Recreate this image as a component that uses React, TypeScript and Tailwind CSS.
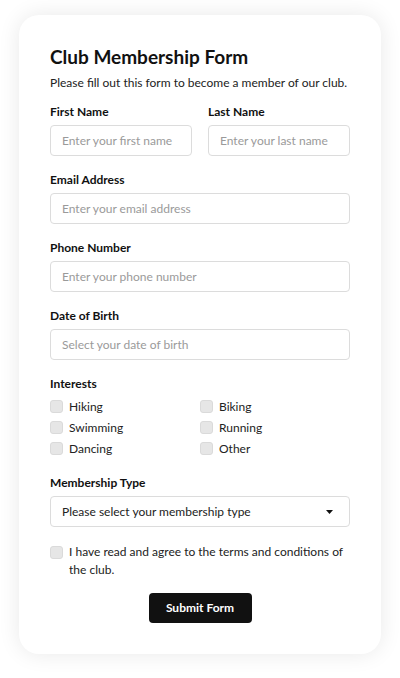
import React from 'react';

const font = { fontFamily: 'Lato, "Noto Sans", sans-serif' };

function Field({ label, placeholder }: { label: string; placeholder: string }) {
  return (
    <div className="flex flex-col">
      <label className="text-[12px] font-bold leading-[16px] text-[#111]">{label}</label>
      <div className="mt-[5px] h-[31px] rounded-[4px] border border-[#dcdcdc] px-[11px] flex items-center whitespace-nowrap overflow-hidden text-[12px] text-[#9a9a9a]">
        {placeholder}
      </div>
    </div>
  );
}

function Check({ label }: { label: string }) {
  return (
    <div className="flex items-center gap-[6px] h-[21px]">
      <span className="w-[13px] h-[13px] rounded-[3px] bg-[#e6e6e6] border border-[#dadada]" />
      <span className="text-[12px] text-[#222]">{label}</span>
    </div>
  );
}

export default function App() {
  const interests = ['Hiking', 'Biking', 'Swimming', 'Running', 'Dancing', 'Other'];

  return (
    <div className="min-h-[678px] bg-white px-[19px] pt-[15px] pb-[24px]" style={font}>
      <div className="rounded-[20px] bg-white shadow-[0_0_22px_rgba(0,0,0,0.09)] px-[31px] pt-[29px] pb-[31px]">
        <h1 className="text-[19px] font-bold leading-[26px] text-[#111]">Club Membership Form</h1>
        <p className="mt-[4px] text-[12px] leading-[18px] text-[#222] whitespace-nowrap">
          Please fill out this form to become a member of our club.
        </p>

        <div className="mt-[12px] grid grid-cols-2 gap-x-[16px]">
          <Field label="First Name" placeholder="Enter your first name" />
          <Field label="Last Name" placeholder="Enter your last name" />
        </div>

        <div className="mt-[16px]">
          <Field label="Email Address" placeholder="Enter your email address" />
        </div>
        <div className="mt-[16px]">
          <Field label="Phone Number" placeholder="Enter your phone number" />
        </div>
        <div className="mt-[16px]">
          <Field label="Date of Birth" placeholder="Select your date of birth" />
        </div>

        <div className="mt-[16px]">
          <div className="text-[12px] font-bold leading-[16px] text-[#111]">Interests</div>
          <div className="mt-[4px] grid grid-cols-2">
            {interests.map(i => (
              <Check key={i} label={i} />
            ))}
          </div>
        </div>

        <div className="mt-[16px]">
          <div className="text-[12px] font-bold leading-[16px] text-[#111]">Membership Type</div>
          <div className="mt-[5px] h-[31px] rounded-[4px] border border-[#dcdcdc] px-[11px] flex items-center justify-between text-[12px] text-[#222]">
            <span>Please select your membership type</span>
            <svg width="7" height="4" viewBox="0 0 7 4" className="mr-[5px]">
              <path d="M0 0h7L3.5 4z" fill="#111" />
            </svg>
          </div>
        </div>

        <div className="mt-[16px] flex items-start gap-[6px]">
          <span className="mt-[3px] shrink-0 w-[13px] h-[13px] rounded-[3px] bg-[#e6e6e6] border border-[#dadada]" />
          <span className="text-[12px] leading-[18px] text-[#222]">
            I have read and agree to the terms and conditions of the club.
          </span>
        </div>

        <div className="mt-[14px] flex justify-center">
          <button className="h-[30px] w-[103px] rounded-[4px] bg-[#111] text-white text-[12px] font-bold">
            Submit Form
          </button>
        </div>
      </div>
    </div>
  );
}
